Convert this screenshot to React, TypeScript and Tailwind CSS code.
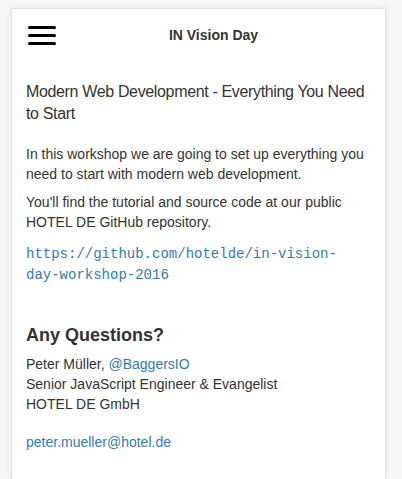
const sans = "font-['Liberation_Sans',Arial,sans-serif]";

function MenuIcon() {
  return (
    <div className="flex w-7 flex-col gap-[5px]">
      <span className="block h-[3px] w-7 rounded-full bg-black" />
      <span className="block h-[3px] w-7 rounded-full bg-black" />
      <span className="block h-[3px] w-7 rounded-full bg-black" />
    </div>
  );
}

export default function App() {
  return (
    <div className={`min-h-[479px] bg-[#f7f7f7] pt-2 text-[#333] ${sans}`}>
      <div className="ml-[11px] mr-[16px] h-[471px] border border-b-0 border-[#e3e3e3] bg-white px-[14px] shadow-[0_0_6px_rgba(0,0,0,0.08)]">
        <header className="flex h-[52px] items-center pl-[2px]">
          <MenuIcon />
          <h1 className="flex-1 text-center text-sm font-bold">IN Vision Day</h1>
        </header>

        <h2 className="mt-5 text-base font-light leading-[22px] tracking-[-0.35px]">
          Modern Web Development - Everything You Need to Start
        </h2>

        <p className="mt-[19px] text-sm leading-5">
          In this workshop we are going to set up everything you need to start with modern web
          development.
        </p>
        <p className="mt-2 text-sm leading-5">
          You'll find the tutorial and source code at our public HOTEL DE GitHub repository.
        </p>
        <p className="mt-[11px] pr-2 text-sm leading-5">
          <a href="#" className="font-['Liberation_Mono',monospace] text-[#337ab7]">
            https://github.com/hotelde/in-vision-day-workshop-2016
          </a>
        </p>

        <h3 className="mt-10 text-lg font-bold leading-5">Any Questions?</h3>
        <div className="mt-[9px] text-sm leading-5">
          <p>
            Peter Müller, <a href="#" className="text-[#337ab7]">@BaggersIO</a>
          </p>
          <p>Senior JavaScript Engineer &amp; Evangelist</p>
          <p>HOTEL DE GmbH</p>
          <p className="mt-[18px]">
            <a href="#" className="text-[#337ab7]">peter.mueller@hotel.de</a>
          </p>
        </div>
      </div>
    </div>
  );
}
